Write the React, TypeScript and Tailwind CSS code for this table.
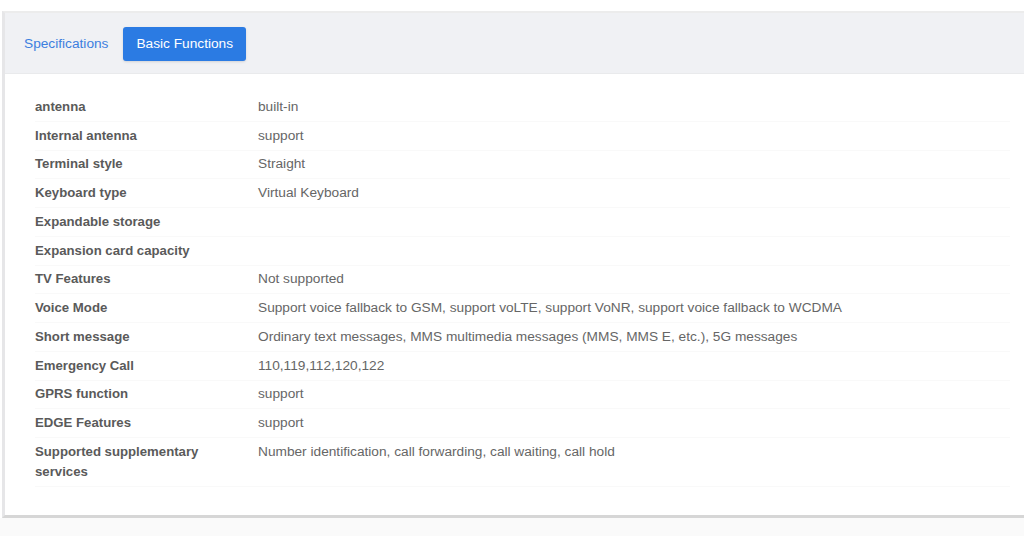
const rows: [string, string][] = [
    ["antenna", "built-in"],
    ["Internal antenna", "support"],
    ["Terminal style", "Straight"],
    ["Keyboard type", "Virtual Keyboard"],
    ["Expandable storage", ""],
    ["Expansion card capacity", ""],
    ["TV Features", "Not supported"],
    ["Voice Mode", "Support voice fallback to GSM, support voLTE, support VoNR, support voice fallback to WCDMA"],
    ["Short message", "Ordinary text messages, MMS multimedia messages (MMS, MMS E, etc.), 5G messages"],
    ["Emergency Call", "110,119,112,120,122"],
    ["GPRS function", "support"],
    ["EDGE Features", "support"],
    ["Supported supplementary services", "Number identification, call forwarding, call waiting, call hold"],
]

const App = () => {
    return (
        <div className="w-[1024px] h-[536px] bg-white overflow-hidden font-['Liberation_Sans',Arial,sans-serif] text-[13.7px]">
            <div className="mt-[11px] ml-[2px] h-[507px] border-t-2 border-t-[#ececec] border-l-[3px] border-l-[#e6e6e8] border-b-[3px] border-b-[#d6d6d6] flex flex-col">
                <div className="h-[61px] bg-[#f0f1f4] flex items-center pt-[2px] pl-[19px] gap-[15px] border-b border-[#e9eaec]">
                    <span className="text-[#3c7fdf]">Specifications</span>
                    <button className="h-[34px] px-[13px] rounded-[3px] bg-[#2b7be3] text-white shadow-sm">Basic Functions</button>
                </div>
                <div className="pt-[19px] pl-[30px] pr-[14px]">
                    {rows.map(([label, value]) => (
                        <div key={label} className="flex py-[3.875px] leading-[20px] border-b border-[#f9f9f9]">
                            <div className="w-[223px] pr-[40px] font-semibold text-[#5a5a5a] text-[13.2px]">{label}</div>
                            <div className="flex-1 text-[#666]">{value}</div>
                        </div>
                    ))}
                </div>
            </div>
            <div className="h-[18px] bg-[#fafafa]"></div>
        </div>
    )
}

export default App
